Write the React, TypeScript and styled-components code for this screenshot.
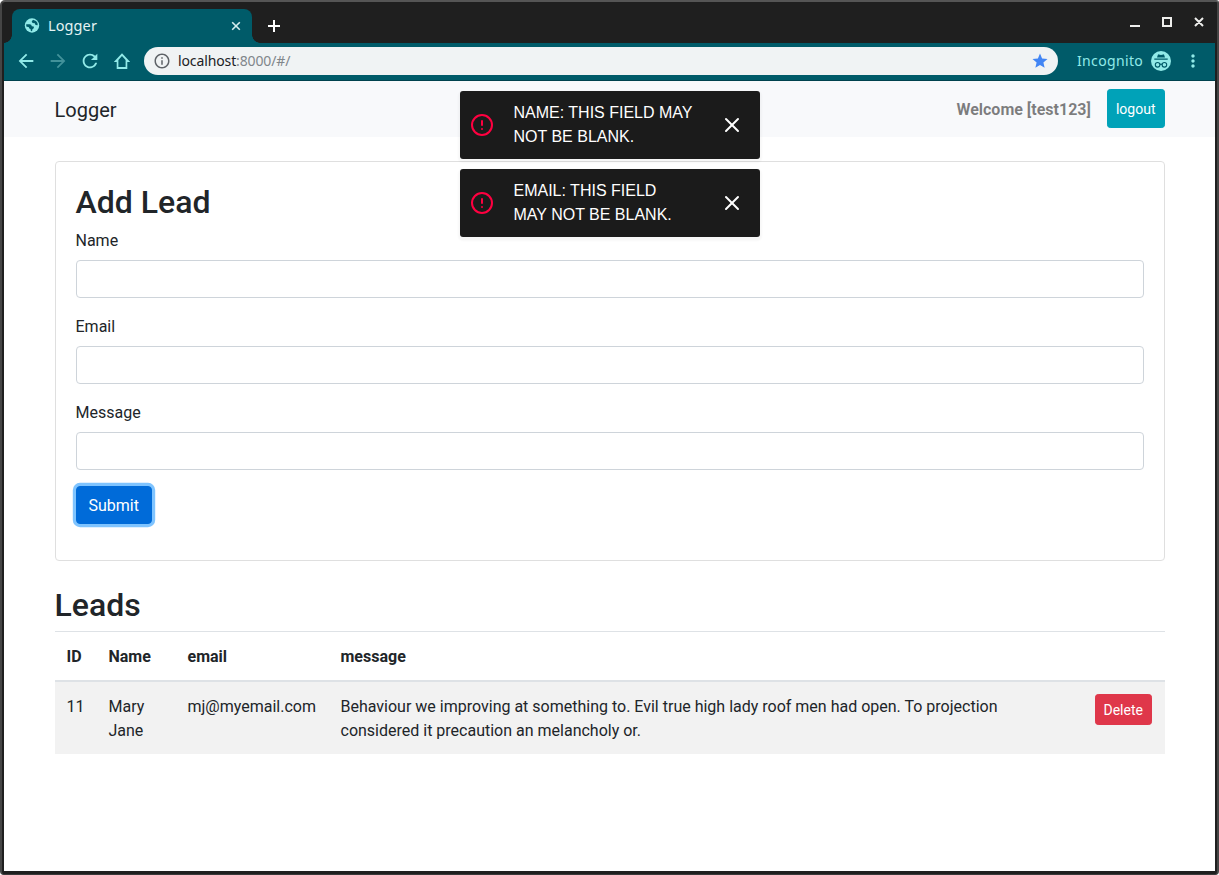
import React from 'react';
import styled, { createGlobalStyle } from 'styled-components';
import { MdArrowBack, MdArrowForward, MdRefresh, MdStar, MdInfoOutline, MdMoreVert } from 'react-icons/md';
import { AlertCircle, X } from 'lucide-react';

const GlobalStyle = createGlobalStyle`
  *, *::before, *::after { box-sizing: border-box; }
  body { margin: 0; background: #fff; color: #212529; font: 16px/1.5 Roboto, sans-serif; }
`;

const Window = styled.div`
  width: 1219px;
  height: 875px;
  display: flex;
  flex-direction: column;
  overflow: hidden;
  background: #1f1f1f;
  border: 2px solid #454545;
  border-top-color: #555;
  border-bottom: 1px solid #3a3a3a;
  border-radius: 5px 3px 4px 4px;
  padding: 0 2px 3px;
`;

const TitleBar = styled.div`
  height: 41px;
  flex: none;
  display: flex;
  align-items: flex-end;
  padding-left: 8px;
`;

const Tab = styled.div`
  position: relative;
  width: 240px;
  height: 34px;
  display: flex;
  align-items: center;
  padding: 0 10px 0 12px;
  border-radius: 8px 8px 0 0;
  background: #005b69;
  color: #91eae8;
  &::before, &::after {
    content: '';
    position: absolute;
    bottom: 0;
    width: 8px;
    height: 8px;
  }
  &::before { left: -8px; background: radial-gradient(circle at 0 0, transparent 7.5px, #005b69 8px); }
  &::after { right: -8px; background: radial-gradient(circle at 100% 0, transparent 7.5px, #005b69 8px); }
`;

const TabTitle = styled.span`
  flex: 1;
  margin-left: 8px;
  padding-bottom: 2px;
  color: #e4f3f4;
  font: 14.5px/20px 'Noto Sans', sans-serif;
  letter-spacing: 0.1px;
`;

const NewTab = styled.div`
  display: flex;
  height: 34px;
  align-items: center;
  margin-left: 15px;
`;

const WindowControls = styled.div`
  display: flex;
  align-items: center;
  align-self: flex-start;
  height: 40px;
  margin-left: auto;
  margin-right: 10px;
`;

const Toolbar = styled.div`
  height: 38px;
  flex: none;
  display: flex;
  align-items: center;
  padding: 0 12px 1px;
  background: #005b69;
  border-bottom: 1px solid #00424e;
  color: #91eae8;
`;

const NavIcon = styled.span<{ $dim?: boolean }>`
  flex: none;
  display: flex;
  justify-content: center;
  width: 20px;
  margin-right: 12px;
  color: ${(p) => (p.$dim ? '#42929a' : '#91eae8')};
  svg { flex: none; }
`;

const AddressBar = styled.div`
  flex: none;
  display: flex;
  align-items: center;
  width: 914px;
  height: 28px;
  padding: 0 9px;
  border-radius: 14px;
  background: #f0f3f4;
  color: #5f6368;
`;

const Url = styled.span`
  flex: 1;
  margin-left: 7px;
  font: 14px/20px 'Noto Sans', sans-serif;
  letter-spacing: -0.12px;
  color: #80868b;
  b { font-weight: 400; color: #202124; }
`;

const Incognito = styled.div`
  flex: none;
  display: flex;
  align-items: center;
  justify-content: space-between;
  margin-left: 19px;
  width: 94px;
  font: 14px/20px 'Noto Sans', sans-serif;
  letter-spacing: 0.35px;
`;

const MenuIcon = styled.span`
  display: flex;
  margin-left: 12px;
`;

const Page = styled.main`
  position: relative;
  flex: 1;
  background: #fff;
`;

const Navbar = styled.nav`
  height: 56px;
  padding: 8px 0;
  background: #f8f9fb;
`;

const Container = styled.div`
  width: 1110px;
  margin: 0 auto;
`;

const NavRow = styled(Container)`
  display: flex;
  align-items: flex-start;
`;

const Brand = styled.a`
  padding-top: 6px;
  font-size: 20px;
  line-height: 30px;
`;

const Welcome = styled.strong`
  margin: 0 16px 0 auto;
  padding: 9px 0 7px;
  color: rgba(0, 0, 0, 0.5);
`;

const buttonPadding = {
  regular: '7px 12px 5px',
  small: '5px 8px 3px',
  tall: '9px 8px 7px',
};

const Button = styled.button<{ $tone: string; $size: keyof typeof buttonPadding; $focused?: boolean }>`
  display: block;
  border: 1px solid ${(p) => p.$tone};
  border-radius: ${(p) => (p.$size === 'regular' ? '4px' : '3.2px')};
  background: ${(p) => p.$tone};
  color: #fff;
  font: ${(p) => (p.$size === 'regular' ? '16px' : '14px')}/1.5 Roboto, sans-serif;
  padding: ${(p) => buttonPadding[p.$size]};
  box-shadow: ${(p) => (p.$focused ? '0 0 0 3.2px #7fc4ff' : 'none')};
`;

const Card = styled.section`
  margin: 24px 0;
  padding: 20px;
  border: 1px solid #dfdfdf;
  border-radius: 4px;
`;

const Heading = styled.h2`
  margin: 0;
  padding: 1px 0 7px;
  font-size: 32px;
  line-height: 1.2;
  font-weight: 500;
`;

const Field = styled.div`
  margin-bottom: 16px;
`;

const Label = styled.label`
  display: block;
  padding: 1px 0 7px;
`;

const Input = styled.input`
  display: block;
  width: 100%;
  height: 38px;
  padding: 6px 12px;
  border: 1px solid #ced4da;
  border-radius: 4px;
  background: #fff;
`;

const Table = styled.table`
  width: 100%;
  margin-top: -1px;
  border-collapse: collapse;
  table-layout: fixed;
`;

const HeaderCell = styled.th<{ $width?: number }>`
  width: ${(p) => (p.$width ? `${p.$width}px` : 'auto')};
  padding: 13px 12px 11px;
  text-align: left;
  border-top: 1px solid #dee2e6;
  border-bottom: 2px solid #dee2e6;
`;

const Cell = styled.td`
  padding: 13px 12px 11px;
  vertical-align: top;
  background: #f2f2f2;
`;

const ActionCell = styled(Cell)`
  padding-top: 12px;
`;

const Toasts = styled.div`
  position: absolute;
  top: 10px;
  left: 50%;
  width: 300px;
  margin-left: -150px;
  display: flex;
  flex-direction: column;
  gap: 10px;
`;

const Toast = styled.div`
  display: flex;
  align-items: center;
  height: 68px;
  padding: 10px;
  border-radius: 3px;
  background: #1b1b1b;
  color: #fff;
  font-family: 'Liberation Sans', Arial, sans-serif;
  text-transform: uppercase;
  box-shadow: 0 2px 2px 2px rgba(0, 0, 0, 0.03);
`;

const ToastText = styled.span`
  flex: 1;
  margin-left: 20px;
`;

const ToastClose = styled.span`
  display: flex;
  margin-left: 20px;
  padding: 0 6px;
`;

const messages = ['Name: This field may not be blank.', 'Email: This field may not be blank.'];
const fields = ['Name', 'Email', 'Message'];

const GlobeIcon = () => (
  <svg width="16" height="16" viewBox="-0.5 0 16 16">
    <circle cx="7.5" cy="7.5" r="7.2" fill="#91eae8" />
    <g fill="#005b69">
      <path d="M1.7 6.2 5.2 6.3Q7.2 6.3 7.3 8.2L9.2 8.4Q9.8 9.4 9 10.4L7.9 11.2 7.6 13.2 6.4 13.1 6 11Q4.4 10.6 4.4 9.2L1.8 8.6Z" />
      <path d="M8.5 1.8 7.2 3.4 8.1 5.1 10.3 5.2 11 7 13.2 7.2 13 5 11.5 2.9Z" />
    </g>
  </svg>
);

const HomeIcon = () => (
  <svg width="18" height="18" viewBox="0 0 18 18" fill="currentColor" fillRule="evenodd">
    <path d="M9 1.2.8 10h2.9v6.9h10.6V10h2.9ZM9 4l3.6 4v7.1H5.4V8Z" />
  </svg>
);

const IncognitoIcon = () => (
  <svg width="20" height="20" viewBox="0 0 20 20">
    <circle cx="10" cy="10" r="10" fill="#91eae8" />
    <g fill="#005b69">
      <path d="M6 6.6 6.9 3.8Q7.1 3.2 7.8 3.4L10 3.9 12.2 3.4Q12.9 3.2 13.1 3.8L14 6.6Z" />
      <path d="M3.3 7.5h13.4v1.3H3.3z" />
    </g>
    <g fill="none" stroke="#005b69" strokeWidth="1.1">
      <circle cx="6.6" cy="13.8" r="2.3" />
      <circle cx="13.4" cy="13.8" r="2.3" />
      <path d="M8.9 13.5q1.1-.7 2.2 0" />
    </g>
  </svg>
);

export default function App() {
  return (
    <Window>
      <GlobalStyle />
      <TitleBar>
        <Tab>
          <GlobeIcon />
          <TabTitle>Logger</TabTitle>
          <svg width="12" height="12" viewBox="0 0 12 12" stroke="#d5eeef" strokeWidth="1.6">
            <path d="m2.2 2.2 7.6 7.6m0-7.6-7.6 7.6" />
          </svg>
        </Tab>
        <NewTab>
          <svg width="14" height="14" viewBox="0 0 14 14" stroke="#fff" strokeWidth="2">
            <path d="M7 1v12M1 7h12" />
          </svg>
        </NewTab>
        <WindowControls>
          <svg width="76" height="12" viewBox="0 0 76 12" fill="none" stroke="#eeeeec" strokeWidth="2">
            <path d="M1 10h10M34 2h8v8h-8zM66 2l8 8m0-8-8 8" />
          </svg>
        </WindowControls>
      </TitleBar>
      <Toolbar>
        <NavIcon><MdArrowBack size={22} /></NavIcon>
        <NavIcon $dim><MdArrowForward size={22} /></NavIcon>
        <NavIcon><MdRefresh size={22} /></NavIcon>
        <NavIcon><HomeIcon /></NavIcon>
        <AddressBar>
          <MdInfoOutline size={18} />
          <Url><b>localhost</b>:8000/#/</Url>
          <MdStar size={18} color="#4285f4" />
        </AddressBar>
        <Incognito>
          Incognito
          <IncognitoIcon />
        </Incognito>
        <MenuIcon><MdMoreVert size={20} /></MenuIcon>
      </Toolbar>
      <Page>
        <Navbar>
          <NavRow>
            <Brand>Logger</Brand>
            <Welcome>Welcome [test123]</Welcome>
            <Button $tone="#00a2b8" $size="tall">logout</Button>
          </NavRow>
        </Navbar>
        <Container>
          <Card>
            <Heading>Add Lead</Heading>
            {fields.map((name) => (
              <Field key={name}>
                <Label>{name}</Label>
                <Input />
              </Field>
            ))}
            <Field>
              <Button $tone="#006bd9" $size="regular" $focused>Submit</Button>
            </Field>
          </Card>
          <Heading>Leads</Heading>
          <Table>
            <thead>
              <tr>
                <HeaderCell $width={42}>ID</HeaderCell>
                <HeaderCell $width={79}>Name</HeaderCell>
                <HeaderCell $width={153}>email</HeaderCell>
                <HeaderCell>message</HeaderCell>
                <HeaderCell $width={82} />
              </tr>
            </thead>
            <tbody>
              <tr>
                <Cell>11</Cell>
                <Cell>Mary Jane</Cell>
                <Cell>mj@myemail.com</Cell>
                <Cell>
                  Behaviour we improving at something to. Evil true high lady roof men had open. To projection
                  considered it precaution an melancholy or.
                </Cell>
                <ActionCell><Button $tone="#df374a" $size="small">Delete</Button></ActionCell>
              </tr>
            </tbody>
          </Table>
        </Container>
        <Toasts>
          {messages.map((text) => (
            <Toast key={text}>
              <AlertCircle size={24} color="#ff0040" />
              <ToastText>{text}</ToastText>
              <ToastClose><X size={24} /></ToastClose>
            </Toast>
          ))}
        </Toasts>
      </Page>
    </Window>
  );
}
